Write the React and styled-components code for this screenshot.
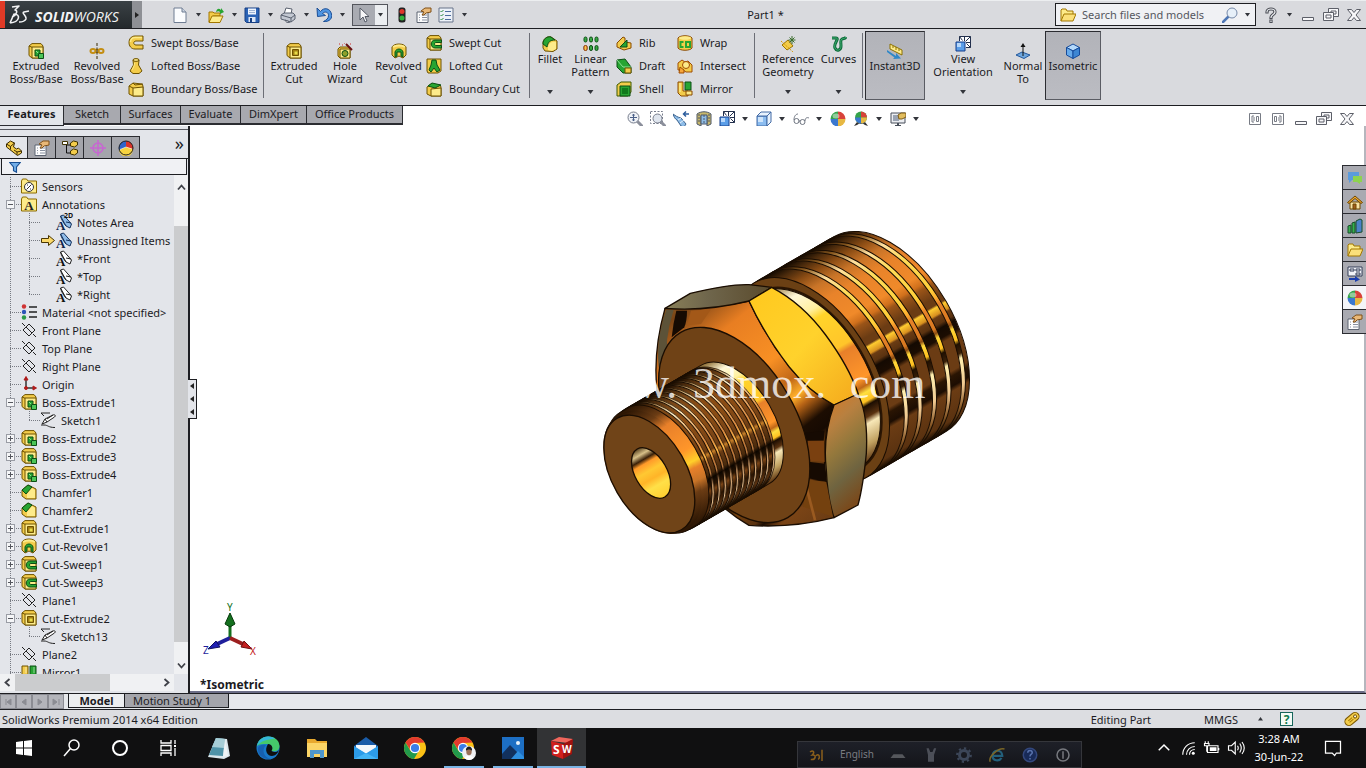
import React from "react";
import styled, { createGlobalStyle, css } from "styled-components";

const GlobalStyle = createGlobalStyle`
  * {
    box-sizing: border-box;
  }

  body {
    margin: 0;
    background: #fff;
    color: #1b1b1f;
    font: 11px/13px "Noto Sans", "Open Sans", sans-serif;
  }

  button, input {
    margin: 0;
    padding: 0;
    border: 0;
    border-radius: 0;
    background: none;
    color: inherit;
    font: inherit;
  }

  ul {
    margin: 0;
    padding: 0;
    list-style: none;
  }

  svg {
    display: block;
    flex: none;
  }
`;

/* ---------- icons ---------- */

const Y = "#f3cc4a";
const YL = "#fdeb8a";
const YD = "#6e5200";
const G = "#27a532";
const GD = "#0c4f14";

const yellowBox = (
  <g stroke={YD} strokeLinejoin="round">
    <path d="M1 3l3-2.400h9l2 2.400v12h-11l-3-2.500z" fill={Y} />
    <path d="M4 4h11v11h-11zM1 3l3 1.200" fill={YL} />
  </g>
);

const icons = {
  extrude: (
    <g>
      {yellowBox}
      <path d="M7 7h5v6H7z" fill={G} stroke={GD} />
      <path d="M8 8l4 4" stroke="#8fe097" />
      <path d="M10.500 10.500h5v5h-5z" fill="#4cc557" stroke={GD} />
    </g>
  ),
  revolve: (
    <g fill="none" stroke="#c38d12" strokeWidth="2">
      <ellipse cx="4" cy="8" rx="2.500" ry="2" />
      <ellipse cx="12" cy="8" rx="2.500" ry="2" />
      <path d="M6 6.500h4M6 9.500h4" strokeWidth="1" />
      <path d="M8 0v3M8 4.500v7M8 13v3" stroke="#3a2a00" strokeWidth="1" />
    </g>
  ),
  sweep: (
    <g>
      <path d="M15 1H7C-1 1-1 14 7 14h8v-4H8C5 10 5 6 8 6h7z" fill={Y} stroke={YD} />
      <path d="M14 2.500H7C4 2.500 2.500 5 2.500 7" fill="none" stroke={YL} strokeWidth="1.500" />
    </g>
  ),
  loft: (
    <g stroke={YD}>
      <path d="M5 2h6l-.5 5 3.500 6-3 2.500H5L2 13l3.500-6z" fill={Y} />
      <ellipse cx="8" cy="2" rx="3" ry="1.400" fill={YL} />
      <path d="M6.500 5L6 8l-2 4" stroke={YL} fill="none" />
    </g>
  ),
  boundary: (
    <g stroke={YD}>
      <path d="M1 5l4-3 9 1 1 2v10H5l-4-2z" fill={Y} />
      <path d="M5 7l10-1v9H5z" fill={YL} />
      <path d="M1 5l4 2M5 2l2 2 8-1" fill="none" />
    </g>
  ),
  cutExtrude: (
    <g>
      {yellowBox}
      <path d="M6.500 6.500h6v6h-6z" fill="#a27e12" stroke={YD} />
      <path d="M8.500 8.500h3v3h-3z" fill="#e7dd4a" />
    </g>
  ),
  hole: (
    <g>
      <path d="M1 6l2-2h9l1 2v9H3l-2-2z" fill={Y} stroke={YD} />
      <path d="M3 6h10v9H3z" fill={YL} stroke={YD} />
      <circle cx="8" cy="10.500" r="3" fill="#8da12a" stroke={GD} />
      <path d="M9 1l6 6" stroke="#6a1012" strokeWidth="2" />
      <path d="M2 1h1M5 2h1M7 0h1M13 1h1" stroke="#d02a2a" />
    </g>
  ),
  cutRevolve: (
    <g>
      <path d="M1 4c2-4 12-4 14 0v8l-3 3-4-2-4 2-3-3z" fill={Y} stroke={YD} />
      <path d="M2 4c3-2 9-2 12 0" fill="none" stroke={YL} strokeWidth="2" />
      <path d="M4 14V9c1-4 7-4 8 0v5l-2-1V9H6v4z" fill={G} stroke={GD} />
    </g>
  ),
  cutSweep: (
    <g>
      {yellowBox}
      <path d="M15.500 5H9c-5 0-5 8 0 8h6.500v-2.500H10c-2 0-2-3 0-3h5.500z" fill={G} stroke={GD} />
    </g>
  ),
  cutLoft: (
    <g>
      <path d="M1 1h14v12l-3 2H2l-1-2z" fill={Y} stroke={YD} />
      <path d="M6 2h4l1 5 3 5-3 2-3-4-3 4-2-2 2-5z" fill={G} stroke={GD} />
    </g>
  ),
  cutBoundary: (
    <g>
      <path d="M1 6l4-3 9 1 1 2v9H5l-4-2z" fill={Y} stroke={YD} />
      <path d="M5 8l10-1v8H5z" fill={YL} stroke={YD} />
      <path d="M2 5l4-3 9 2-6 3z" fill={G} stroke={GD} />
    </g>
  ),
  fillet: (
    <g>
      <path d="M1 6C2 2 6 0 9 1l6 4v8l-4 2.500L3 15l-2-3z" fill={Y} stroke={YD} />
      <path d="M1 8C1 3 5 0 9 1l4 3C8 4 6 6 5 11z" fill={G} stroke={GD} />
      <path d="M6 12c0-4 3-7 8-6v7l-4 2-4-1z" fill={YL} />
    </g>
  ),
  chamfer: (
    <g>
      <path d="M1 6l6-5 8 4v10H5l-4-3z" fill={Y} stroke={YD} />
      <path d="M1 6l6-5 4 2-6 7z" fill={G} stroke={GD} />
      <path d="M6 10l5-6 3 2v8H6z" fill={YL} />
    </g>
  ),
  pattern: (
    <g fill="#39a944" stroke={GD}>
      {[1, 6.500, 12].map((x) => (
        <React.Fragment key={x}>
          <rect x={x} y="1" width="3" height="5" rx="1.500" />
          <rect x={x} y="9.500" width="3" height="5" rx="1.500" />
        </React.Fragment>
      ))}
      <rect x="1" y="9.500" width="3" height="5" rx="1.500" fill={Y} stroke="#c0401c" />
    </g>
  ),
  rib: (
    <g>
      <path d="M1 8l6-6 2 1v4l6 1v5l-7 2-7-3z" fill={Y} stroke="#8a4a00" />
      <path d="M4 12l7-7v7z" fill={G} stroke={GD} />
    </g>
  ),
  draft: (
    <g>
      <path d="M1 2l8-1 6 8v6H7L1 9z" fill={G} stroke={GD} />
      <path d="M1 2l6 7 8 0" fill="none" stroke="#8fe097" />
      <path d="M9 10h6v5H9z" fill={Y} stroke={YD} />
    </g>
  ),
  shell: (
    <g>
      <path d="M1 4l4-3h10v10l-3 4H1z" fill={Y} stroke="#3c5a00" />
      <path d="M4 5h10v10H4z" fill={G} stroke={GD} />
      <path d="M6 7h6v6H6z" fill="#107a1c" />
    </g>
  ),
  wrap: (
    <g>
      <path d="M1 3c2-3 12-3 14 0v10c-2 3-12 3-14 0z" fill={Y} stroke="#8a4a00" />
      <ellipse cx="8" cy="3" rx="6" ry="1.800" fill={YL} />
      <path d="M6.500 7H3.500v5h3M9 7h4v5H9z" fill="none" stroke={G} strokeWidth="2" />
    </g>
  ),
  intersect: (
    <g stroke="#a04c00">
      <path d="M1 5l4-3 3 2 3-1 4 4v7H9l-3-2H1z" fill={Y} />
      <circle cx="9" cy="7" r="3.500" fill={YL} />
      <path d="M3 9l4 3v3H2z" fill="#f7a63a" />
    </g>
  ),
  mirror: (
    <g>
      <path d="M1 1h5v9h5v5H4l-3-3z" fill={Y} stroke="#8a4a00" />
      <path d="M8 1h6v8H8z" fill={G} stroke={GD} />
      <path d="M9 10h6v4H9z" fill={YL} stroke="#8a4a00" />
      <path d="M3 2v9" stroke={YL} strokeWidth="1.500" />
    </g>
  ),
  mirrorPair: (
    <g>
      <path d="M1 2h6v9h-2v4l-4-2z" fill={Y} stroke={YD} />
      <path d="M9 2h6v11l-4 2v-4H9z" fill={G} stroke={GD} />
      <path d="M5 3v6M13 3v6" stroke="#fff" strokeOpacity=".5" />
    </g>
  ),
  geometry: (
    <g>
      <path d="M2 9l6-5 5 6-6 4z" fill={Y} stroke="#9a7400" />
      <path d="M1 5l12 11" stroke="#d79a00" strokeDasharray="2 1" />
      <path d="M12 0v8M8.500 4h7M9.500 1.500l5 5M14.500 1.500l-5 5" stroke="#3b6d2c" />
    </g>
  ),
  curves: (
    <g fill="none">
      <path d="M1 2h4c4 0-3 6-1 10 2 4 6 2 6-2s-1-6 1-7 3 0 4-2" stroke="#0e6b3a" strokeWidth="3" />
      <path d="M1 2h4c4 0-3 6-1 10 2 4 6 2 6-2s-1-6 1-7 3 0 4-2" stroke="#3fae71" />
    </g>
  ),
  instant: (
    <g>
      <path d="M3 1l12 6v5L3 6z" fill={YL} stroke="#8c7000" />
      <path d="M6 3v2M9 4v3M12 6v2" stroke="#8c7000" />
      <path d="M0 7l9 6v-3l5 5.500-8 .5 1.500-1.500L0 9z" fill="#2f88c8" />
    </g>
  ),
  orientation: (
    <g strokeLinejoin="round">
      <path d="M4.500 .5h11v11h-11z" fill="#fff" />
      <path d="M4.500 5V.5h11v11H11M4.500 .5l3 4M15.500 .5l-5 5M15.500 11.500l-4-4M9.500 1v4M15 6.500h-4" fill="none" stroke="#23304d" />
      <path d="M1 6h9v9H1z" fill="#5b9ee8" stroke="#163f8c" />
      <path d="M2 7h4v4H2z" fill="#b8d8fb" />
    </g>
  ),
  normal: (
    <g>
      <path d="M1 12l6-3 8 3-6 3.500z" fill="#6fa7df" stroke="#23579c" />
      <path d="M8 13V2" stroke="#111" />
      <path d="M5.500 4L8 0l2.500 4z" fill="#111" />
    </g>
  ),
  isometric: (
    <g stroke="#164b9b" strokeLinejoin="round">
      <path d="M8 1l6.500 3.500L8 8 1.500 4.500z" fill="#b4d9fb" />
      <path d="M1.500 4.500L8 8v7.500L1.500 12z" fill="#67abeb" />
      <path d="M14.500 4.500L8 8v7.500l6.500-3.500z" fill="#3d86d3" />
    </g>
  ),
  page: (
    <g>
      <path d="M2 1h8l4 4v10.500H2z" fill="#fbfcfe" stroke="#6e7c92" />
      <path d="M10 1v4h4" fill="#cdd6e3" stroke="#6e7c92" />
    </g>
  ),
  open: (
    <g>
      <path d="M1 5h4l1 1h6v3H5l-4 6z" fill={Y} stroke="#a27700" />
      <path d="M4 9h11l-3 6.500H1z" fill={YL} stroke="#a27700" />
      <path d="M8 5c1-4 3-4 5-2V1l3 4-4 2V5C11 4 10 4 8 5z" fill={G} />
    </g>
  ),
  save: (
    <g>
      <path d="M1 1h14v14.500H2.500L1 14z" fill="#2b63b6" stroke="#173f83" />
      <path d="M4 1.500h8v6H4z" fill="#eef4fd" />
      <path d="M5 3.500h6M5 5.500h6" stroke="#9fb4d4" />
      <path d="M4.500 10h7v5h-7z" fill="#dce6f5" />
      <path d="M6 11h2v4H6z" fill="#173f83" />
    </g>
  ),
  print: (
    <g stroke="#59606e">
      <path d="M4 7l2-6 6 1-1 5z" fill="#fff" />
      <path d="M1 8l3-2h9l2 2v4l-4 3-10-3z" fill="#c3c8d2" />
      <path d="M1 8l10 3 4-3M11 11v4" fill="none" />
      <path d="M5 13l5 2-3 .8z" fill="#fff" />
    </g>
  ),
  undo: (
    <path
      d="M1 1l.5 8.500 8-1-3-2C9 4 12.500 5 12.500 8.500c0 3-2 4.500-5 6C14 15 16.500 11 15.500 7 14 1 8 0 4.500 4.500z"
      fill="#4f95e2"
      stroke="#1b4e96"
      strokeLinejoin="round"
    />
  ),
  cursor: <path d="M4 1v12l3-3 2 5 2-1-2-4.500h4z" fill="#f6f6f8" stroke="#555a66" />,
  traffic: (
    <g>
      <rect x="4.500" y=".5" width="7" height="15" rx="2.500" fill="#222" />
      <circle cx="8" cy="4.500" r="2.500" fill="#e0352b" />
      <circle cx="8" cy="11" r="2.500" fill="#32b33c" />
    </g>
  ),
  properties: (
    <g>
      <path d="M1 5h11v10.500H1z" fill="#fdfdfd" stroke="#5d6472" />
      <path d="M3 8h1M6 8h5M3 10.500h1M6 10.500h5M3 13h1M6 13h5" stroke="#8890a0" />
      <path d="M5 4l4-3h6v4l-5 1-2 2H6l2-3z" fill="#e9b877" stroke="#805018" />
    </g>
  ),
  options: (
    <g>
      <path d="M1 1h14v14H1z" fill="#edf2f9" stroke="#667389" />
      <path d="M2.500 4l1 1 2-2M2.500 8l1 1 2-2M2.500 12l1 1 2-2" fill="none" stroke="#2d8c3f" />
      <path d="M7 4.500h6M7 8.500h6M7 12.500h6" stroke="#4c6c9e" />
    </g>
  ),
  folder: (
    <g strokeLinejoin="round">
      <path d="M1 14V3l1-1h4l1 2h6v3" fill={YL} stroke="#a27700" />
      <path d="M4 7h12l-3 7H1z" fill="#fbe07a" stroke="#a27700" />
    </g>
  ),
  lens: (
    <g fill="none">
      <path d="M1 15l5-5" stroke="#4f77b5" strokeWidth="2.500" strokeLinecap="round" />
      <circle cx="10" cy="6" r="5" fill="#e7f0f9" stroke="#7689a8" />
    </g>
  ),
  help: (
    <g fill="none" strokeLinecap="square">
      <path d="M4 5c0-4 8-4 8 0 0 2.500-4 2.500-4 5.500M8 14v.5" stroke="#4a4d55" strokeWidth="3.200" />
      <path d="M4 5c0-4 8-4 8 0 0 2.500-4 2.500-4 5.500M8 14v.5" stroke="#eef0f3" strokeWidth="1.200" />
    </g>
  ),
  minimize: <path d="M2.500 10.500h11v3h-11z" fill="#f7f7f9" stroke="#5c5f68" />,
  restore: (
    <g fill="#f7f7f9" stroke="#5c5f68">
      <path d="M5.500 1.500h10v8h-10zM8 4h5v3H8z" />
      <path d="M.5 5.500h10v8H.5zM3 8h5v3H3z" />
    </g>
  ),
  close: (
    <path
      d="M1.500 2.500h4L8 5.500l2.500-3h4L10 8l4.500 5.500h-4L8 10.500l-2.500 3h-4L6 8z"
      fill="#f7f7f9"
      stroke="#5c5f68"
    />
  ),
  paneLeft: (
    <g fill="none" stroke="#777b84">
      <path d="M2.500 2.500h11v11h-11zM9.500 5.500h2v5h-2z" />
      <path d="M7 5H5v6h2M7 6v4" />
    </g>
  ),
  paneRight: (
    <g fill="none" stroke="#777b84">
      <path d="M2.500 2.500h11v11h-11zM4.500 5.500h2v5h-2z" />
      <path d="M9 5h2v6H9M9 6v4" />
    </g>
  ),
  zoomFit: (
    <g fill="none" stroke="#777d8c">
      <path d="M10 10l5 5" stroke="#8b8f9b" strokeWidth="3" strokeLinecap="round" />
      <circle cx="6.500" cy="6.500" r="5.500" fill="#eef1f6" />
      <path d="M6.500 3v7M3 6.500h7M5.500 4.500l1-1.500 1 1.500M5.500 8.500l1 1.500 1-1.500" stroke="#4a5f87" />
    </g>
  ),
  zoomArea: (
    <g fill="none" stroke="#777d8c">
      <path d="M.5 .5h12v12H.5z" strokeDasharray="2 1.500" />
      <path d="M11 11l4 4" stroke="#8b8f9b" strokeWidth="3" strokeLinecap="round" />
      <circle cx="7.500" cy="7.500" r="4.500" fill="#dfe5ee" />
    </g>
  ),
  prevView: (
    <g>
      <path d="M0 3c3 2 4 3 8 4l5 6-2 3-3-1-4-6C2 8 1 6 0 3z" fill="#8dbce8" stroke="#3d648f" />
      <path d="M5 9l3-2M7 12l4-3" stroke="#e8f3fc" />
      <path d="M16 3h-5M13 .5L10.500 3 13 5.500" fill="none" stroke="#2c5d9d" strokeWidth="1.500" />
    </g>
  ),
  section: (
    <g stroke="#4c5768">
      <path d="M1 3c4-3 10-3 14 0v10l-4 2V5H5v10l-4-2z" fill="#c7b76b" />
      <path d="M5 4h6v9H5z" fill="#8fbde6" />
      <path d="M3 3v9M13 3v9M8 4v9" strokeDasharray="2 1" />
    </g>
  ),
  display: (
    <g stroke="#426aa5" strokeLinejoin="round">
      <path d="M1 5h10v10H1z" fill="#8cbdf0" />
      <path d="M2 6h5v5H2z" fill="#cfe5fb" stroke="none" />
      <path d="M1 5l4-4h10l-4 4zM11 15l4-4V1l-4 4z" fill="#e7f2fd" />
    </g>
  ),
  glasses: (
    <g fill="none" stroke="#6e7480">
      <circle cx="3.500" cy="10" r="2.500" />
      <circle cx="9.500" cy="11" r="2.500" />
      <path d="M1 9C1 5 3 3 5 3M12 10c0-3 2-4 4-3M6 10h1" />
    </g>
  ),
  sphere: (
    <g>
      <path d="M8 8V.5A7.500 7.500 0 0 0 .5 8z" fill="#35a34b" />
      <path d="M8 8V.5A7.500 7.500 0 0 1 15.500 8z" fill="#d8433a" />
      <path d="M8 8H.5A7.500 7.500 0 0 0 8 15.500z" fill="#3b78cf" />
      <path d="M8 8h7.500A7.500 7.500 0 0 1 8 15.500z" fill="#e7b843" />
      <ellipse cx="6" cy="5" rx="3.500" ry="2.500" fill="#fff" fillOpacity=".45" />
    </g>
  ),
  scene: (
    <g>
      <circle cx="8" cy="6.500" r="6" fill="#35a34b" />
      <path d="M8 6.500V.5a6 6 0 0 1 6 6z" fill="#d8433a" />
      <path d="M8 6.500H2a6 6 0 0 0 6 6z" fill="#3b78cf" />
      <path d="M8 6.500h6a6 6 0 0 1-6 6z" fill="#e7b843" />
      <path d="M1 15l3-4 2 1.500h4l2-1.500 3 4-3-1-1.500-1h-5L4 14z" fill="#333" />
    </g>
  ),
  viewSettings: (
    <g>
      <path d="M1 2h14v10H1z" fill="#eceef2" stroke="#484e5a" />
      <path d="M3 4h6v6H3z" fill="#9aa3b2" />
      <path d="M5 15h6M8 12v3" stroke="#484e5a" strokeWidth="2" />
      <path d="M8 4l3-2h5v4l-4 2H9z" fill="#e2bd5d" stroke="#7c5b15" />
    </g>
  ),
  part: (
    <g stroke="#3c2b00" strokeLinejoin="round">
      <path d="M.5 4l4-3 4 2-1 4 3 2 2-1 3 3v2l-4 2.500L.5 7z" fill={Y} />
      <path d="M.5 4l4 2.500 4-3.500M4.500 6.500v3M8 10l3 2 4.500-1M11 12v3" fill="none" />
    </g>
  ),
  config: (
    <g stroke="#403300">
      <path d="M4.500 1v12H8M4.500 5H8" fill="none" stroke="#111" />
      <path d="M.5 1.500h5v3h-5z" fill="#fff" />
      <path d="M8.500 3l3-2 4 1v3l-3 2-4-1zM8.500 11l3-2 4 1v3l-3 2-4-1z" fill={Y} />
    </g>
  ),
  target: (
    <g fill="none" stroke="#c865d2" strokeWidth="1.500">
      <circle cx="8" cy="8" r="5" />
      <path d="M8 0v16M0 8h16" />
    </g>
  ),
  appearance: (
    <g>
      <path d="M8 8V1a7 7 0 0 1 5 12z" fill="#d8332a" />
      <path d="M8 8L3 13A7 7 0 0 1 8 1z" fill="#2e64c9" />
      <path d="M8 7l7 2a7 7 0 0 1-14 1z" fill="#f6d33e" />
      <path d="M8 7l-6 2.500M8 7l6 2" stroke="#fff" strokeOpacity=".6" />
      <circle cx="8" cy="8" r="7" fill="none" stroke="#222" />
    </g>
  ),
  sensors: (
    <g>
      <path d="M.5 15V3l1-2h4l1.500 2h8.500v12z" fill={YL} stroke="#8b6b00" />
      <circle cx="8" cy="9" r="4.500" fill="#fff" stroke="#333" />
      <path d="M5.500 11.500l5-5M6 7h1M9 11h1" stroke="#333" />
    </g>
  ),
  annotations: (
    <g>
      <path d="M.5 15V3l1-2h4l1.500 2h8.500v12z" fill={YL} stroke="#8b6b00" />
      <text x="8" y="14" textAnchor="middle" fontFamily="Liberation Serif, serif" fontWeight="700" fontSize="13" fill="#222">A</text>
    </g>
  ),
  note: (
    <g>
      <path d="M4.500 2l3-1 8 9-1.500 4-4-2z" fill="#8fbce9" stroke="#16345f" />
      <path d="M4.500 2c1 4 3 7 5.500 10M10 8l5 1" fill="none" stroke="#16345f" />
      <text x="0" y="16" fontFamily="Liberation Serif, serif" fontWeight="700" fontSize="13" fill="#10264c">A</text>
    </g>
  ),
  notePlain: (
    <g>
      <path d="M4.500 2l3-1 8 9-1.500 4-4-2z" fill="#fff" stroke="#222" />
      <path d="M4.500 2c1 4 3 7 5.500 10M10 8l5 1" fill="none" stroke="#222" />
      <text x="0" y="16" fontFamily="Liberation Serif, serif" fontWeight="700" fontSize="13" fill="#111">A</text>
    </g>
  ),
  material: (
    <g>
      <path d="M8 3h8M8 8h8M8 13h8" stroke="#222" strokeWidth="1.500" />
      <circle cx="3" cy="2.500" r="2.200" fill="#cf3434" />
      <circle cx="3" cy="8" r="2.200" fill="#2c54b7" />
      <circle cx="3" cy="13.500" r="2.200" fill="#2b9a46" />
    </g>
  ),
  plane: (
    <g fill="none" stroke="#222">
      <path d="M8 2l6 6-6 6-6-6z" />
      <path d="M1 1l3 3M12 12l3 3M5 5l6 6" />
    </g>
  ),
  origin: (
    <g stroke="#b01c1c" fill="#b01c1c">
      <path d="M5 2v10h9" fill="none" stroke="#333" strokeWidth="1.500" />
      <path d="M3 4l2-3.500L7 4zM12 10l3.500 2-3.500 2z" />
      <circle cx="5" cy="12" r="1.500" />
    </g>
  ),
  sketch: (
    <g fill="none" stroke="#222">
      <path d="M10 1H1l3 3M1 13h3c4 0 4 2.500 11 2.500" />
      <path d="M2 12l3-5 8-4c2-1 3 1 1.500 2L7 10zM5 7l2 3M13 3l-6 4" fill="#fff" />
    </g>
  ),
  task: (
    <g>
      <path d="M1 2h11v8H5l-3 3v-3H1z" fill="#5b9bdc" />
      <path d="M6 6h9v6h-2v2l-3-2H6z" fill="#8ed34f" />
    </g>
  ),
  home: (
    <g stroke="#6c4700">
      <path d="M3 8h10v7H3z" fill="#f7e2a5" />
      <path d="M.5 8.500L8 2l7.500 6.500L14 9.500 8 4.500l-6 5z" fill="#f2a72c" />
      <path d="M6 10h3v5H6z" fill="#a15b1c" />
    </g>
  ),
  library: (
    <g stroke="#174c2a">
      <path d="M1 8l3-1v8H1zM5 5l3-1v11H5z" fill="#37b04d" />
      <path d="M9 3l4-2 2 1v12l-6 1z" fill="#4a82c9" />
    </g>
  ),
  palette: (
    <g>
      <path d="M1 1h14v9H1z" fill="#f1f3f8" stroke="#333c56" />
      <path d="M3 3h4v2H3zM9 3h4v2H9zM9 7h4v2H9z" fill="none" stroke="#333c56" />
      <path d="M2 12h6v-2l5 3.500L8 16v-2H2z" fill="#1c3fae" />
    </g>
  ),
  filter: <path d="M1 2h14l-5 6v7l-4-2V8z" fill="#72aee8" stroke="#184f93" strokeWidth="1.500" />,
  tag: (
    <g transform="rotate(-40 8 8)">
      <rect x="0" y="4" width="16" height="8" rx="4" fill={Y} stroke="#7c5800" />
      <circle cx="12" cy="8" r="1.500" fill="#fff" stroke="#7c5800" />
      <path d="M4 7h5M4 9h5" stroke="#a77a00" />
    </g>
  ),
};

const Icon = ({ name, size = 16 }) => (
  <svg width={size} height={size} viewBox="0 0 16 16" aria-hidden="true">
    {icons[name]}
  </svg>
);

const Caret = styled.span`
  width: 7px;
  height: 4px;
  flex: none;
  background: #33353b;
  clip-path: polygon(8% 0, 92% 0, 50% 100%);
`;

/* ---------- title bar ---------- */

const Window = styled.div`
  display: flex;
  flex-direction: column;
  min-height: 100vh;
`;

const TitleBar = styled.header`
  display: flex;
  align-items: center;
  height: 29px;
  background: #d9dade;
  border-top: 1px solid #eceef0;
  border-bottom: 1px solid #1d1e22;
`;

const Brand = styled.div`
  display: flex;
  align-items: center;
  width: 132px;
  height: 27px;
  padding-left: 4px;
  background: linear-gradient(#3a4145, #24292c);
  border-left: 5px solid #e03a26;
`;

const Grip = styled.button`
  width: 10px;
  height: 27px;
  background: #8e9095;
  display: flex;
  align-items: center;
  justify-content: center;

  &::after {
    content: "";
    border: 3px solid transparent;
    border-left: 4px solid #222;
    border-right: 0;
  }
`;

const ToolButton = styled.button`
  display: flex;
  align-items: center;
  justify-content: center;
  gap: 7px;
  min-width: 16px;
  height: 22px;
`;

const QuickBar = styled.div`
  display: flex;
  align-items: center;
  gap: 6px;
  padding-left: 30px;
`;

const SelectButton = styled.button`
  display: flex;
  align-items: center;
  height: 22px;
  border: 1px solid #53555c;
  background: #eceef1;

  span:first-child {
    display: flex;
    align-items: center;
    justify-content: center;
    width: 22px;
    height: 20px;
    margin-right: 2px;
    background: #a9abb2;
  }

  ${Caret} {
    margin-right: 3px;
  }
`;

const DocTitle = styled.div`
  flex: 1;
  padding-left: 8px;
  text-align: center;
`;

const Search = styled.label`
  display: flex;
  align-items: center;
  gap: 6px;
  width: 201px;
  height: 23px;
  padding: 0 4px;
  background: #f0f1f4;
  border: 1px solid #1d1e22;

  input {
    flex: 1;
    min-width: 0;
    outline: 0;
  }

  input::placeholder {
    color: #55575e;
    opacity: 1;
  }
`;

const WindowButtons = styled.div`
  display: flex;
  align-items: center;
  gap: 7px;
  padding: 0 4px 0 7px;
`;

/* ---------- ribbon ---------- */

const Ribbon = styled.div`
  display: flex;
  height: 77px;
  padding-left: 6px;
  background: #d9dade;
  border-bottom: 1px solid #1d1e22;
`;

const BigButton = styled.button`
  display: flex;
  flex-direction: column;
  align-items: center;
  width: ${(p) => p.$w}px;
  height: ${(p) => (p.$active ? 69 : 76)}px;
  padding-top: ${(p) => (p.$drop ? 7 : 14)}px;
  white-space: nowrap;
  flex: none;

  ${(p) =>
    p.$active &&
    css`
      margin-top: 2px;
      padding-top: 11px;
      background: linear-gradient(#b2b3b9, #bbbcc2);
      border: 1px solid #5a5c63;
      border-top-color: #2b2c31;
      border-left-color: #2b2c31;
    `}

  ${Caret} {
    margin-top: auto;
    margin-bottom: 11px;
  }

  p {
    margin: 0;
  }
`;

const ButtonList = styled.div`
  display: flex;
  flex-direction: column;
  width: ${(p) => p.$w}px;
  padding-top: 2px;
  flex: none;
`;

const ListButton = styled.button`
  display: flex;
  align-items: center;
  gap: 7px;
  height: 23px;
  white-space: nowrap;
`;

const Separator = styled.span`
  width: 1px;
  height: 65px;
  margin: ${(p) => (p.$tight ? "4px 2px 0 1px" : "4px 5px 0")};
  background: #6c6e76;
`;

const Big = ({ icon, lines, w, drop, active }) => (
  <BigButton $w={w} $drop={drop} $active={active} aria-pressed={active}>
    <Icon name={icon} />
    <p>
      {lines[0]}
      <br />
      {lines[1]}
    </p>
    {drop && <Caret />}
  </BigButton>
);

const List = ({ w, items }) => (
  <ButtonList $w={w}>
    {items.map(([icon, label]) => (
      <ListButton key={label}>
        <Icon name={icon} />
        {label}
      </ListButton>
    ))}
  </ButtonList>
);

/* ---------- command tabs and view toolbar ---------- */

const TabRow = styled.div`
  display: flex;
  align-items: flex-start;
  height: 20px;
`;

const CommandTabs = styled.nav`
  display: flex;
`;

const CommandTab = styled.button`
  width: ${(p) => p.$w}px;
  height: 19px;
  padding-bottom: 2px;
  background: #a8a9af;
  border: 1px solid #2b2c31;
  border-width: 0 1px 2px 0;

  ${(p) =>
    p.$active &&
    css`
      height: 20px;
      padding-bottom: 4px;
      background: #e3e5e9;
      border-bottom-width: 1px;
      font-weight: 700;
    `}
`;

const ViewTools = styled.div`
  display: flex;
  flex: 1;
  justify-content: center;
  gap: 7px;
  padding: 2px 104px 0 0;
`;

const DocButtons = styled.div`
  display: flex;
  gap: 7px;
  padding: 2px 11px 0 0;
`;

/* ---------- feature tree ---------- */

const Body = styled.main`
  display: flex;
  flex: 1;
`;

const Sidebar = styled.aside`
  display: flex;
  flex-direction: column;
  width: 190px;
  flex: none;
  background: #e3e5ea;
  border-right: 2px solid #1d1e22;
`;

const PanelTabs = styled.div`
  display: flex;
  align-items: flex-end;
  height: 30px;
  margin-top: 3px;
  border-top: 1px solid #55575e;
  border-bottom: 1px solid #1d1e22;
`;

const PanelTab = styled.button`
  display: flex;
  align-items: center;
  justify-content: center;
  width: 28px;
  height: 22px;
  background: ${(p) => (p.$active ? "#e3e5ea" : "#a4a5ab")};
  border: 1px solid #2b2c31;
  border-left-width: 0;
  border-bottom: 0;
`;

const More = styled.button`
  margin: 0 4px 8px auto;
  font-size: 18px;
  line-height: 13px;
`;

const Filter = styled.label`
  display: flex;
  align-items: center;
  gap: 6px;
  height: 16px;
  margin: 0 1px;
  padding-left: 7px;
  background: #f0f1f4;
  border: 1px solid #1d1e22;
  border-top: 0;

  input {
    width: 140px;
    outline: 0;
  }
`;

const TreeArea = styled.div`
  display: flex;
  height: 499px;
`;

const Tree = styled.ul`
  flex: 1;
  min-width: 0;
  padding-top: 2px;
  overflow: hidden;
`;

const TreeRow = styled.li`
  display: flex;
  align-items: center;
  height: 18px;
  white-space: nowrap;

  b {
    padding-left: 5px;
    font-weight: 400;
  }
`;

const dots = (dir) => `repeating-linear-gradient(${dir}, #777a82 0 1px, transparent 1px 2px)`;

const Gutter = styled.span`
  display: flex;
  align-items: center;
  width: ${(p) => (p.$sketch ? 19 : p.$inner ? 20 : 21)}px;
  height: 18px;
  flex: none;
  padding-left: 6px;
  background-image: ${dots("to bottom")}, ${dots("to right")};
  background-repeat: no-repeat;
  background-position: ${(p) => (p.$inner ? 8 : 10)}px 0, ${(p) => (p.$inner ? 8 : 10)}px 9px;
  background-size: 1px ${(p) => (p.$last ? 9 : 18)}px, ${(p) => (p.$through ? 0 : 11)}px 1px;
`;

const Expander = styled.button`
  width: 9px;
  height: 9px;
  border: 1px solid #9a9da5;
  background:
    linear-gradient(#55575e, #55575e) center / 5px 1px no-repeat,
    linear-gradient(#55575e, #55575e) center / 1px ${(p) => (p.$open ? 0 : 5)}px no-repeat,
    #f5f6f8;
`;

const ArrowSlot = styled.span`
  display: flex;
  width: 15px;
  flex: none;
`;

const ScrollColumn = styled.div`
  display: flex;
  flex-direction: column;
  width: 14px;
  padding-top: 4px;
  background: #f0f1f3;
`;

const ScrollArrow = styled.button`
  display: flex;
  align-items: center;
  justify-content: center;
  width: 15px;
  height: 17px;
`;

const ScrollThumb = styled.span`
  height: 416px;
  margin-top: 30px;
  background: #cbccce;
`;

const ScrollRow = styled.div`
  display: flex;
  height: 17px;
  width: 174px;
  background: #f0f1f3;

  span {
    width: 95px;
    background: #cbccce;
  }

  button:last-child {
    margin-left: auto;
  }
`;

const Chevron = ({ d }) => (
  <svg width="9" height="9" viewBox="0 0 9 9" aria-hidden="true">
    <path d={d} fill="none" stroke="#3f4148" strokeWidth="1.800" />
  </svg>
);

const YellowArrow = () => (
  <svg width="14" height="11" viewBox="0 0 14 11" aria-hidden="true">
    <path d="M.5 3.500h7v-3l6 5-6 5v-3h-7z" fill="#fbd96a" stroke="#4a3600" />
  </svg>
);

const treeItems = [
  { icon: "sensors", label: "Sensors" },
  { icon: "annotations", label: "Annotations", open: true },
  { icon: "note", label: "Notes Area", level: 2, badge: true },
  { icon: "note", label: "Unassigned Items", level: 2, arrow: true },
  { icon: "notePlain", label: "*Front", level: 2 },
  { icon: "notePlain", label: "*Top", level: 2 },
  { icon: "notePlain", label: "*Right", level: 2, last: true },
  { icon: "material", label: "Material <not specified>" },
  { icon: "plane", label: "Front Plane" },
  { icon: "plane", label: "Top Plane" },
  { icon: "plane", label: "Right Plane" },
  { icon: "origin", label: "Origin" },
  { icon: "extrude", label: "Boss-Extrude1", open: true },
  { icon: "sketch", label: "Sketch1", level: 1, last: true },
  { icon: "extrude", label: "Boss-Extrude2", open: false },
  { icon: "extrude", label: "Boss-Extrude3", open: false },
  { icon: "extrude", label: "Boss-Extrude4", open: false },
  { icon: "chamfer", label: "Chamfer1" },
  { icon: "chamfer", label: "Chamfer2" },
  { icon: "cutExtrude", label: "Cut-Extrude1", open: false },
  { icon: "cutRevolve", label: "Cut-Revolve1", open: false },
  { icon: "cutSweep", label: "Cut-Sweep1", open: false },
  { icon: "cutSweep", label: "Cut-Sweep3", open: false },
  { icon: "plane", label: "Plane1" },
  { icon: "cutExtrude", label: "Cut-Extrude2", open: true },
  { icon: "sketch", label: "Sketch13", level: 1, last: true },
  { icon: "plane", label: "Plane2" },
  { icon: "mirrorPair", label: "Mirror1" },
];

const TreeItem = ({ icon, label, open, level = 0, arrow, last, badge }) => (
  <TreeRow>
    <Gutter $through={level > 0}>
      {open !== undefined && <Expander $open={open} aria-label={`Toggle ${label}`} />}
    </Gutter>
    {level > 0 && <Gutter $inner $sketch={level === 1} $last={last} />}
    {level === 2 && <ArrowSlot>{arrow && <YellowArrow />}</ArrowSlot>}
    <svg width="16" height="16" viewBox="0 0 16 16" overflow="visible" aria-hidden="true">
      {icons[icon]}
      {badge && (
        <text x="8" y="4" fontSize="7" fontWeight="700" fill="#111">
          2D
        </text>
      )}
    </svg>
    <b>{label}</b>
  </TreeRow>
);

/* ---------- 3D view ---------- */

const Viewport = styled.section`
  position: relative;
  display: flex;
  flex: 1;
  align-items: center;
  justify-content: center;
  padding-bottom: 46px;
  background: #fff;
  border-right: 2px solid #b5b6bd;
  border-bottom: 2px solid #6b6d86;
`;

const Collapse = styled.button`
  position: absolute;
  left: -2px;
  top: 253px;
  width: 9px;
  height: 40px;
  display: flex;
  flex-direction: column;
  align-items: center;
  justify-content: space-around;
  background: #e3e5ea;
  border: 1px solid #1d1e22;
  border-left: 0;

  i {
    border: 3px solid transparent;
    border-right: 4px solid #222;
    border-left: 0;
  }
`;

const Orientation = styled.div`
  position: absolute;
  left: 10px;
  bottom: 0;
  font-weight: 700;
  font-size: 12px;

  div {
    padding-top: 16px;
  }
`;

const TaskPane = styled.div`
  position: absolute;
  right: -2px;
  top: 39px;
  width: 24px;
  border-top: 1px solid #2b2c31;
  border-left: 1px solid #2b2c31;
`;

const TaskButton = styled.button`
  display: flex;
  align-items: center;
  justify-content: center;
  width: 23px;
  height: 24px;
  background: ${(p) => (p.$active ? "#f4f5f8" : "#a9aab1")};
  border-bottom: 1px solid #2b2c31;
`;

const stops = (list) => list.map(([o, c]) => <stop key={o} offset={o} stopColor={c} />);

const thread = [
  [0, "#120900"], [0.04, "#4a2a0c"], [0.09, "#8a4c14"], [0.15, "#c87428"], [0.22, "#e8832a"], [0.34, "#f08a2a"],
  [0.38, "#d0701c"], [0.4, "#9a5418"], [0.46, "#6b3c14"], [0.49, "#6b3c14"], [0.5, "#ffcb30"],
  [0.53, "#d89020"], [0.54, "#6b3c14"], [0.57, "#5a3210"], [0.59, "#140a02"], [0.63, "#1c0d02"],
  [0.65, "#6b3c14"], [0.78, "#6b3c14"], [0.8, "#2a1503"], [0.84, "#1c0d02"], [0.86, "#6b3c14"], [0.97, "#5a3210"], [1, "#120900"],
];

const groove = [
  [0, "#2a1503"], [0.06, "#8a5a20"], [0.14, "#ffe0a0"], [0.24, "#ffdc5a"], [0.42, "#ffcf3a"],
  [0.46, "#ffb030"], [0.49, "#e8842a"], [0.58, "#d87820"], [0.6, "#8a4c14"], [0.62, "#ffd83a"], [0.67, "#ffc020"],
  [0.69, "#201002"], [0.73, "#3a2008"], [0.75, "#fff0b0"], [0.86, "#f0c890"], [0.94, "#8a5a28"], [1, "#120900"],
];

const fineThread = [
  [0, "#120900"], [0.06, "#4a2a0c"], [0.14, "#7a4818"], [0.24, "#8a4c14"], [0.36, "#8a4c14"],
  [0.5, "#7a4416"], [0.57, "#6b3c14"], [0.59, "#c88028"], [0.62, "#6b3c14"], [0.72, "#4a2a0c"],
  [0.75, "#0c0600"], [0.8, "#2a1503"], [0.83, "#7a4416"], [0.88, "#2a1503"], [0.95, "#5a3210"], [1, "#120900"],
];

const fineGroove = [
  [0, "#2a1503"], [0.08, "#b89058"], [0.2, "#fff0c8"], [0.34, "#f0b878"], [0.5, "#d88840"],
  [0.6, "#ffb84a"], [0.64, "#c07838"], [0.72, "#b87840"], [0.75, "#1c0d02"], [0.8, "#c09060"], [0.92, "#e8c090"], [1, "#120900"],
];

const neck = [
  [0, "#8a6a30"], [0.1, "#fff8d8"], [0.2, "#fff0a0"], [0.25, "#ffd42a"], [0.43, "#ffc52a"],
  [0.46, "#e8802a"], [0.62, "#ff962a"], [0.66, "#c06818"], [0.69, "#ffe040"], [0.73, "#ffc020"],
  [0.75, "#1c0d02"], [0.8, "#5a3210"], [0.83, "#f8e8b8"], [0.92, "#c0a060"], [1, "#5a3210"],
];

// cross sections are circles seen at 30 degrees, so the short radius is 0.577 of the long one
const flat = 0.577;

const Disc = ({ r, t, ...rest }) => <ellipse cx="0" cy={-t} rx={r} ry={r * flat} {...rest} />;

const Tube = ({ r, from, to, fill, stroke = "#1a0d02", width = 3 }) => {
  const b = r * flat;
  return (
    <path
      d={`M${-r} ${-from}L${-r} ${-to}A${r} ${b} 0 0 1 ${r} ${-to}L${r} ${-from}A${r} ${b} 0 0 1 ${-r} ${-from}z`}
      fill={`url(#${fill})`}
      stroke={stroke}
      strokeWidth={width}
    />
  );
};

const bigThreads = [820, 770, 720, 670, 622];
const smallThreads = [268, 247, 226, 205, 184, 163, 142, 121, 100, 79, 58];

const Fitting = () => (
  <svg width="400" height="320" viewBox="-36 18 1200 960" role="img" aria-label="Threaded fitting">
    <defs>
      <linearGradient id="thread">{stops(thread)}</linearGradient>
      <linearGradient id="groove">{stops(groove)}</linearGradient>
      <linearGradient id="fine">{stops(fineThread)}</linearGradient>
      <linearGradient id="fineGroove">{stops(fineGroove)}</linearGradient>
      <linearGradient id="neck">{stops(neck)}</linearGradient>
      <linearGradient id="rim">
        {stops([[0, "#2a1503"], [0.15, "#6b3c14"], [0.25, "#e8802a"], [0.48, "#ff962a"], [0.58, "#ffd02a"], [0.63, "#e8802a"], [0.72, "#c87428"], [0.8, "#6b3c14"], [1, "#2a1503"]])}
      </linearGradient>
      <linearGradient id="topFace">{stops([[0, "#8a8058"], [0.4, "#6f664c"], [1, "#5a4a2c"]])}</linearGradient>
      <linearGradient id="hexFront" gradientUnits="userSpaceOnUse" x1="220" y1="270" x2="720" y2="900">
        {stops([[0, "#8a5a20"], [0.05, "#7a4416"], [0.2, "#e87e22"], [0.4, "#f89024"], [0.5, "#c06818"], [0.56, "#ffb02a"], [0.6, "#b86416"], [0.67, "#1c0d02"], [0.72, "#160a02"], [0.77, "#74410f"], [0.84, "#5a3210"], [0.86, "#1c0d02"], [0.9, "#7a4416"], [1, "#6b3c14"]])}
      </linearGradient>
      <linearGradient id="yellowFace" x1="0" y1="0" x2="1" y2="1">{stops([[0, "#ffc81e"], [0.5, "#ffd22c"], [1, "#f4a81c"]])}</linearGradient>
      <linearGradient id="sideFace" x1="0" y1="0" x2="0.3" y2="1">{stops([[0, "#d87a24"], [0.28, "#b88040"], [0.5, "#94783c"], [0.75, "#6f6440"], [1, "#7a4a1c"]])}</linearGradient>
      <linearGradient id="bore" x1="0" x2="1">{stops([[0, "#5a4420"], [0.12, "#d8c088"], [0.22, "#3a2008"], [0.3, "#ff9a2a"], [0.45, "#ffc832"], [0.6, "#ffb428"], [0.75, "#ffe048"], [1, "#ffcf30"]])}</linearGradient>
    </defs>

    <g transform="translate(181 759) rotate(60)">
      <Tube r={337} from={800} to={834} fill="thread" />
      {bigThreads.map((t) => (
        <React.Fragment key={t}>
          <Tube r={337} from={t - 50} to={t} fill="groove" />
          <Tube r={337} from={t - 50} to={t - 14} fill="thread" />
        </React.Fragment>
      ))}
      <Disc r={337} t={557} fill="#6b4014" stroke="#1a0d02" strokeWidth="3" />
      <Disc r={308} t={557} fill="#2a1503" />
      <Tube r={302} from={400} to={554} fill="neck" />
    </g>

    <g stroke="#1a0d02" strokeWidth="4" strokeLinejoin="round">
      <path
        d="M228 265Q350 270 480 243Q530 350 600 440Q660 515 735 555Q700 640 708 750Q715 830 735 893Q610 925 480 916Q400 870 330 790Q230 680 205 520Q190 400 228 265z"
        fill="url(#hexFront)"
      />
      <path d="M228 265L304 220Q420 192 480 194L548 202L480 243Q350 275 228 265z" fill="url(#topFace)" />
      <path d="M480 243L548 202Q640 250 710 345Q780 440 808 522L735 555Q660 515 600 440Q530 350 480 243z" fill="url(#yellowFace)" />
      <path d="M735 555L806 522Q838 580 832 700Q822 800 807 855L735 893Q715 830 712 750Q700 650 735 555z" fill="url(#sideFace)" />
    </g>
    <g stroke="none">
      <path d="M232 270h22q-30 90-18 170l-24 20q-16-90 20-190z" fill="#5c5238" />
      <path d="M262 272h32q0 30-8 50l-38 30q4-40 14-80z" fill="#160a02" />
      <path d="M306 272l60-4-30 44-42 4z" fill="#a35818" />
      <path d="M640 640l66-8-2 30-56 0z" fill="#160a02" />
      <path d="M655 662l50 0 2 64-48-4z" fill="#7a4010" />
      <path d="M658 725l50 6 4 54-54-10z" fill="#160a02" />
      <path d="M656 778l56 8 20 104-90-30z" fill="#74410f" />
      <path d="M652 800l26 100" stroke="#9a5a20" strokeWidth="8" />
    </g>

    <g transform="translate(181 762) rotate(60)">
      <Disc r={321} t={294} fill="#6f4216" stroke="#1a0d02" strokeWidth="4" />
      <Tube r={205} from={250} to={297} fill="neck" />
      {smallThreads.map((t) => (
        <React.Fragment key={t}>
          <Tube r={205} from={t - 24} to={t} fill="fineGroove" width={2} />
          <Tube r={205} from={t - 24} to={t - 8} fill="fine" width={3} />
        </React.Fragment>
      ))}
      <Tube r={204} from={18} to={40} fill="rim" />
      <Tube r={198} from={2} to={20} fill="rim" stroke="none" />
      <Disc r={193} t={0} fill="#704418" stroke="#1a0d02" strokeWidth="4" />
      <Disc r={83} t={6} fill="url(#bore)" stroke="#1a0d02" strokeWidth="4" />
    </g>

    <g fill="#fff" fillOpacity=".78" fontFamily="Liberation Serif, serif" fontSize="132">
      <text x="145" y="535">w.</text>
      <text x="312" y="535">3dmox.</text>
      <text x="782" y="535">com</text>
    </g>
  </svg>
);

const Triad = () => (
  <svg width="64" height="64" viewBox="0 -4 64 64" aria-hidden="true">
    <g fontSize="10" fontWeight="400">
      <path d="M30 36V20" stroke="#14701e" strokeWidth="3" />
      <path d="M25 22l5-11 5 11-5 3z" fill="#14701e" stroke="#063a0c" />
      <path d="M30 36l-15 7" stroke="#1f1f9c" strokeWidth="4" />
      <path d="M8 47l8-8 4 6z" fill="#2020b4" stroke="#101060" />
      <path d="M30 36l15 7" stroke="#9c1f1f" strokeWidth="4" />
      <path d="M52 47l-8-8-3 6z" fill="#c42020" stroke="#6a1010" />
      <text x="27" y="9" fill="#14701e">Y</text>
      <text x="3" y="52" fill="#1f1f9c">Z</text>
      <text x="50" y="53" fill="#c42020">X</text>
    </g>
  </svg>
);

/* ---------- bottom bars ---------- */

const SheetTabs = styled.div`
  display: flex;
  height: 17px;
  background: #e6e8eb;
  border-top: 1px solid #1d1e22;
  border-bottom: 1px solid #1d1e22;
`;

const StepButton = styled.button`
  display: flex;
  align-items: center;
  justify-content: center;
  width: 16px;
  height: 15px;
  background: #b3b4ba;
  border: 1px solid #8b8c93;
`;

const SheetTab = styled.button`
  height: 14px;
  width: ${(p) => p.$w}px;
  padding-bottom: 1px;
  text-align: ${(p) => (p.$active ? "center" : "left")};
  padding-left: ${(p) => (p.$active ? 0 : 8)}px;
  font-weight: ${(p) => (p.$active ? 700 : 400)};
  background: ${(p) => (p.$active ? "#eceef0" : "#a4a5ab")};
  border: 1px solid #1d1e22;
  border-top: 0;
  margin-left: ${(p) => (p.$active ? 4 : -1)}px;
`;

const StatusBar = styled.footer`
  display: flex;
  align-items: center;
  height: 18px;
  padding: 0 6px 0 2px;
  background: #dcdde1;
`;

const Spacer = styled.span`
  flex: ${(p) => (p.$w ? "none" : 1)};
  width: ${(p) => p.$w || 0}px;
`;

const HelpBadge = styled.button`
  width: 13px;
  height: 14px;
  background: #f3fbf6;
  border: 1px solid #16655a;
  color: #0b7a4b;
  font-weight: 700;
  font-size: 12px;
  line-height: 11px;
`;

const Taskbar = styled.footer`
  display: flex;
  height: 40px;
  background: #101011;
  color: #fff;
`;

const TaskbarButton = styled.button`
  display: flex;
  align-items: center;
  justify-content: center;
  width: ${(p) => p.$w}px;
  height: 40px;
  flex: none;
  background:
    linear-gradient(#7ab4e4, #7ab4e4) bottom / ${(p) => (p.$focus ? 49 : p.$running ? 40 : 0)}px 2px no-repeat,
    ${(p) => (p.$focus ? "#323335" : "transparent")};
`;

const LanguageBar = styled.div`
  display: flex;
  align-items: center;
  align-self: flex-end;
  justify-content: space-between;
  width: 285px;
  height: 27px;
  margin-left: auto;
  padding: 0 9px;
  background: linear-gradient(#1e2028, #14151a);
  border: 1px solid #35363b;
  color: #7a7c82;
  font-size: 10px;

  button {
    display: flex;
    align-items: center;
  }
`;

const Tray = styled.div`
  display: flex;
  align-items: center;
  gap: 6px;
  margin-left: 73px;
  padding-right: 23px;
`;

const Clock = styled.button`
  width: 56px;
  line-height: 18px;
  white-space: nowrap;
`;

const Glyph = ({ size = 24, children }) => (
  <svg width={size} height={size} viewBox="0 0 24 24" fill="none" aria-hidden="true">
    {children}
  </svg>
);

const chrome = (
  <>
    <circle cx="12" cy="12" r="11" fill="#fbc116" />
    <path d="M2.500 6.500A11 11 0 0 1 21.500 6.500L12 7l-4 8z" fill="#e33b2e" />
    <path d="M2.500 6.500A11 11 0 0 0 11 23l5-8.500-4 2.500-4.500-2z" fill="#229a4b" />
    <circle cx="12" cy="12" r="5.200" fill="#fff" />
    <circle cx="12" cy="12" r="4.100" fill="#3a7de8" />
  </>
);

const apps = [
  {
    label: "Notepad",
    art: (
      <>
        <path d="M9 2l11 1 3 17-6 3-16-2z" fill="#dbe7ec" />
        <path d="M9 2l9 1-2 17-14-1z" fill="#4f93a8" />
        <path d="M9 2l9 1-1 9L5 11z" fill="#a6cdd6" />
        <path d="M18 3l3 17-5 1z" fill="#eef3f5" />
      </>
    ),
  },
  {
    label: "Edge",
    art: (
      <>
        <circle cx="12" cy="12" r="11.500" fill="#1878c9" />
        <path d="M1 10C3-3 23-2 23.500 10c0 5-5 6-8 5 2-3 0-7-4-7-5 0-8 0-10.500 2z" fill="#45c96b" />
        <path d="M1 10C3 1 13-2 19 3c-8 0-14 2-18 7z" fill="#35b6d8" />
        <path d="M12 8c4 0 5.500 4 3.500 7 3 2 6 1 7.500-1-1 3-4 6-7 6-5 0-8-6-4-12z" fill="#101011" />
        <path d="M10 9c-5 5-2 13 5 14-8 1-14-5-13-11 1-3 5-4 8-3z" fill="#1660b0" />
      </>
    ),
  },
  {
    label: "File Explorer",
    art: (
      <>
        <path d="M2 3h8l2 2h10v16H2z" fill="#e8a92e" />
        <path d="M2 7h20v14H2z" fill="#fbd567" />
        <path d="M5 22v-8h14v8h-4v-4H9v4z" fill="#4f97cd" />
      </>
    ),
  },
  {
    label: "Mail",
    art: (
      <>
        <path d="M0 10L12 1l12 9v13H0z" fill="#1a5ca8" />
        <path d="M2 9h20v3l-10 6-10-6z" fill="#f4f7fa" />
        <path d="M0 10l12 7.500L24 10v13H0z" fill="#2c9be8" />
        <path d="M0 23l12-6 12 6z" fill="#45b4f4" />
      </>
    ),
  },
  { label: "Chrome", art: chrome },
  {
    label: "Chrome profile",
    running: true,
    art: (
      <>
        <g transform="translate(-1 0)">{chrome}</g>
        <circle cx="17" cy="17" r="7" fill="#eef0f3" />
        <path d="M12.500 22c1-3 8-3 9 0-2 2.500-7 2.500-9 0z" fill="#fff" />
        <ellipse cx="17" cy="15.500" rx="2.700" ry="3.800" fill="#9a7058" />
        <path d="M14 15c-1-6 7-6 6 0-1-2-5-2-6 0z" fill="#1b1b1d" />
      </>
    ),
  },
  {
    label: "Photos",
    running: true,
    art: (
      <>
        <path d="M1 1h22v22H1z" fill="#1d6fc4" />
        <path d="M1 18l8-9 8 8v6H1z" fill="#12315e" />
        <path d="M10 23l7-8 6 6v2z" fill="#2e8fe0" />
        <circle cx="17" cy="7" r="2" fill="#e8f2fb" />
      </>
    ),
  },
  {
    label: "SolidWorks",
    running: true,
    focus: true,
    art: (
      <>
        <path d="M1 5l8-4 14 2-5 4z" fill="#f0665c" />
        <path d="M1 5l12 3v15L2 19z" fill="#d01f1c" />
        <path d="M13 8l10-5-1 15-9 5z" fill="#a01210" />
        <text x="3" y="18" fontSize="12" fontWeight="700" fill="#fff">S</text>
        <text x="12" y="17" fontSize="10" fontWeight="700" fill="#fff">W</text>
      </>
    ),
  },
];

const quickTools = [["page", "New"], ["open", "Open"], ["save", "Save"], ["print", "Print"], ["undo", "Undo"]];

const viewTools = [
  ["zoomFit", "Zoom to Fit"],
  ["zoomArea", "Zoom to Area"],
  ["prevView", "Previous View"],
  ["section", "Section View"],
  ["orientation", "View Orientation", true],
  ["display", "Display Style", true],
  ["glasses", "Hide/Show Items", true],
  ["sphere", "Edit Appearance"],
  ["scene", "Apply Scene", true],
  ["viewSettings", "View Settings", true],
];

const commandTabs = [["Features", 64], ["Sketch", 57], ["Surfaces", 60], ["Evaluate", 60], ["DimXpert", 66], ["Office Products", 96]];

const App = () => (
  <Window>
    <GlobalStyle />
    <TitleBar>
      <Brand>
        <svg width="120" height="24" viewBox="0 0 120 24" role="img" aria-label="SolidWorks">
          <g fill="none" stroke="#f3f4f5" strokeWidth="1.600" strokeLinejoin="round">
            <path d="M3 4l7-1-4 4c3 0 2 5-3 7M1 20l4-9c7 0 6 8-4 9M20 8l-5 1c-3 1 3 4 2 7-1 2-4 3-7 3" />
          </g>
          <text x="26" y="19" fontFamily="Open Sans, sans-serif" fontStyle="italic" fontSize="14" fill="#f3f4f5">
            <tspan fontWeight="700">SOLID</tspan>WORKS
          </text>
        </svg>
      </Brand>
      <Grip aria-label="Show menu" />
      <QuickBar>
        {quickTools.map(([icon, label]) => (
          <ToolButton key={icon} aria-label={label}>
            <Icon name={icon} />
            <Caret />
          </ToolButton>
        ))}
        <SelectButton aria-label="Select">
          <span>
            <Icon name="cursor" />
          </span>
          <Caret />
        </SelectButton>
        <ToolButton aria-label="Rebuild">
          <Icon name="traffic" />
        </ToolButton>
        <ToolButton aria-label="File Properties">
          <Icon name="properties" />
        </ToolButton>
        <ToolButton aria-label="Options">
          <Icon name="options" />
          <Caret />
        </ToolButton>
      </QuickBar>
      <DocTitle>Part1 *</DocTitle>
      <Search>
        <Icon name="folder" />
        <input type="text" placeholder="Search files and models" aria-label="Search files and models" />
        <Icon name="lens" />
        <Caret />
      </Search>
      <WindowButtons>
        <ToolButton aria-label="Help">
          <Icon name="help" />
          <Caret />
        </ToolButton>
        <ToolButton aria-label="Minimize">
          <Icon name="minimize" />
        </ToolButton>
        <ToolButton aria-label="Restore">
          <Icon name="restore" />
        </ToolButton>
        <ToolButton aria-label="Close">
          <Icon name="close" />
        </ToolButton>
      </WindowButtons>
    </TitleBar>

    <Ribbon>
      <Big icon="extrude" lines={["Extruded", "Boss/Base"]} w={60} />
      <Big icon="revolve" lines={["Revolved", "Boss/Base"]} w={62} />
      <List w={130} items={[["sweep", "Swept Boss/Base"], ["loft", "Lofted Boss/Base"], ["boundary", "Boundary Boss/Base"]]} />
      <Separator />
      <Big icon="cutExtrude" lines={["Extruded", "Cut"]} w={50} />
      <Big icon="hole" lines={["Hole", "Wizard"]} w={52} />
      <Big icon="cutRevolve" lines={["Revolved", "Cut"]} w={55} />
      <List w={98} items={[["cutSweep", "Swept Cut"], ["cutLoft", "Lofted Cut"], ["cutBoundary", "Boundary Cut"]]} />
      <Separator />
      <Big icon="fillet" lines={["Fillet"]} w={30} drop />
      <Big icon="pattern" lines={["Linear", "Pattern"]} w={51} drop />
      <List w={61} items={[["rib", "Rib"], ["draft", "Draft"], ["shell", "Shell"]]} />
      <List w={72} items={[["wrap", "Wrap"], ["intersect", "Intersect"], ["mirror", "Mirror"]]} />
      <Separator />
      <Big icon="geometry" lines={["Reference", "Geometry"]} w={56} drop />
      <Big icon="curves" lines={["Curves"]} w={45} drop />
      <Separator $tight />
      <Big icon="instant" lines={["Instant3D"]} w={60} active />
      <Big icon="orientation" lines={["View", "Orientation"]} w={76} drop />
      <Big icon="normal" lines={["Normal", "To"]} w={44} />
      <Big icon="isometric" lines={["Isometric"]} w={56} active />
    </Ribbon>

    <TabRow>
      <CommandTabs>
        {commandTabs.map(([label, w], i) => (
          <CommandTab key={label} $w={w} $active={i === 0}>
            {label}
          </CommandTab>
        ))}
      </CommandTabs>
      <ViewTools>
        {viewTools.map(([icon, label, drop]) => (
          <ToolButton key={icon} aria-label={label}>
            <Icon name={icon} />
            {drop && <Caret />}
          </ToolButton>
        ))}
      </ViewTools>
      <DocButtons>
        {["paneLeft", "paneRight", "minimize", "restore", "close"].map((name) => (
          <ToolButton key={name} aria-label={name}>
            <Icon name={name} />
          </ToolButton>
        ))}
      </DocButtons>
    </TabRow>

    <Body>
      <Sidebar>
        <PanelTabs>
          {["part", "properties", "config", "target", "appearance"].map((name, i) => (
            <PanelTab key={name} $active={i === 0} aria-label={name}>
              <Icon name={name} />
            </PanelTab>
          ))}
          <More aria-label="More tabs">»</More>
        </PanelTabs>
        <Filter>
          <Icon name="filter" size={12} />
          <input type="text" aria-label="Filter tree" />
        </Filter>
        <TreeArea>
          <Tree>
            {treeItems.map((item) => (
              <TreeItem key={item.label} {...item} />
            ))}
          </Tree>
          <ScrollColumn>
            <ScrollArrow aria-label="Scroll up">
              <Chevron d="M1 6.500l3.500-4L8 6.500" />
            </ScrollArrow>
            <ScrollThumb />
            <Spacer />
            <ScrollArrow aria-label="Scroll down">
              <Chevron d="M1 2.500l3.500 4 3.500-4" />
            </ScrollArrow>
          </ScrollColumn>
        </TreeArea>
        <ScrollRow>
          <ScrollArrow aria-label="Scroll left">
            <Chevron d="M6.500 1l-4 3.500 4 3.500" />
          </ScrollArrow>
          <span />
          <ScrollArrow aria-label="Scroll right">
            <Chevron d="M2.500 1l4 3.500-4 3.500" />
          </ScrollArrow>
        </ScrollRow>
      </Sidebar>
      <Viewport>
        <Collapse aria-label="Collapse panel">
          <i />
          <i />
          <i />
        </Collapse>
        <Fitting />
        <Orientation>
          <Triad />
          <div>*Isometric</div>
        </Orientation>
        <TaskPane>
          {["task", "home", "library", "folder", "palette", "sphere", "properties"].map((name) => (
            <TaskButton key={name} $active={name === "sphere"} aria-label={name}>
              <Icon name={name} />
            </TaskButton>
          ))}
        </TaskPane>
      </Viewport>
    </Body>

    <SheetTabs>
      {["M8 2L4 5l4 3zM3 2v6", "M7 2L3 5l4 3z", "M3 2l4 3-4 3z", "M2 2l4 3-4 3zM8 2v6"].map((d) => (
        <StepButton key={d} aria-label="Step">
          <svg width="10" height="10" viewBox="0 0 10 10">
            <path d={d} fill="#8b8c93" stroke="#8b8c93" />
          </svg>
        </StepButton>
      ))}
      <SheetTab $w={57} $active>
        Model
      </SheetTab>
      <SheetTab $w={105}>Motion Study 1</SheetTab>
    </SheetTabs>
    <StatusBar>
      <span>SolidWorks Premium 2014 x64 Edition</span>
      <Spacer />
      <span>Editing Part</span>
      <Spacer $w={53} />
      <span>MMGS</span>
      <Spacer $w={19} />
      <svg width="7" height="4" viewBox="0 0 7 4">
        <path d="M1 3.500h5L3.500 0z" fill="#33353b" />
      </svg>
      <Spacer $w={16} />
      <HelpBadge>?</HelpBadge>
      <Spacer $w={51} />
      <Icon name="tag" />
    </StatusBar>

    <Taskbar>
      <TaskbarButton $w={48} aria-label="Start">
        <Glyph>
          <path d="M4 6l7-1v6.500H4zM12 5l8-1v7.500h-8zM4 12.500h7V19l-7-1zM12 12.500h8V20l-8-1z" fill="#fff" />
        </Glyph>
      </TaskbarButton>
      <TaskbarButton $w={48} aria-label="Search">
        <Glyph>
          <circle cx="14" cy="9" r="5" stroke="#fff" strokeWidth="1.500" />
          <path d="M10.500 12.500L4 20" stroke="#fff" strokeWidth="1.500" />
        </Glyph>
      </TaskbarButton>
      <TaskbarButton $w={48} aria-label="Cortana">
        <Glyph>
          <circle cx="12" cy="12" r="7" stroke="#fff" strokeWidth="2" />
        </Glyph>
      </TaskbarButton>
      <TaskbarButton $w={50} aria-label="Task View">
        <Glyph>
          <path d="M4 4v3h10V4M4 20v-3h10v3M4 9.500h10v5H4zM18 4v4M18 12v8" stroke="#fff" strokeWidth="1.300" />
          <path d="M17 9h2v2h-2z" fill="#fff" />
        </Glyph>
      </TaskbarButton>
      {apps.map((app) => (
        <TaskbarButton key={app.label} $w={49} $running={app.running} $focus={app.focus} aria-label={app.label}>
          <Glyph>{app.art}</Glyph>
        </TaskbarButton>
      ))}
      <LanguageBar>
        <button aria-label="Input tool">
          <Glyph size={18}>
            <path d="M4 8c4-3 7 0 3 4 6-1 5 7-2 6M12 13c4-4 6 2 3 5M20 5v15" stroke="#8a5f1c" strokeWidth="2" />
          </Glyph>
        </button>
        <button>English</button>
        <button aria-label="Keyboard">
          <Glyph size={18}><path d="M2 16l4-5h12l4 5z" fill="#55575c" /></Glyph>
        </button>
        <button aria-label="Character map">
          <Glyph size={18}><path d="M6 3h3l2 5h3l2-5h3l-3 9v9H8v-9z" fill="#4c4f58" /></Glyph>
        </button>
        <button aria-label="Settings">
          <Glyph size={18}>
            <circle cx="12" cy="12" r="6" stroke="#3c4658" strokeWidth="4" />
            <circle cx="12" cy="12" r="9" stroke="#3c4658" strokeWidth="3" strokeDasharray="3 4" />
          </Glyph>
        </button>
        <button aria-label="Web">
          <Glyph size={18}>
            <path d="M6 13h13c0-9-13-9-13 0 0 7 9 8 12 3" stroke="#23607c" strokeWidth="3" />
            <path d="M3 21C0 14 14 2 22 4" stroke="#7a6626" strokeWidth="2" />
          </Glyph>
        </button>
        <button aria-label="Help">
          <Glyph size={18}>
            <circle cx="12" cy="12" r="9" fill="#182a58" stroke="#33477c" strokeWidth="2" />
            <path d="M9 9c0-4 6-4 6 0 0 2-3 2-3 5M12 16v2" stroke="#5872ac" strokeWidth="2" />
          </Glyph>
        </button>
        <button aria-label="Close bar">
          <Glyph size={18}>
            <circle cx="12" cy="12" r="8" stroke="#77797f" strokeWidth="2" />
            <path d="M12 7v10" stroke="#77797f" strokeWidth="2" />
          </Glyph>
        </button>
      </LanguageBar>
      <Tray>
        <button aria-label="Hidden icons">
          <Glyph size={18}><path d="M5 15l7-7 7 7" stroke="#fff" strokeWidth="2" /></Glyph>
        </button>
        <button aria-label="Network">
          <Glyph size={18}>
            <path d="M5 21C5 12 12 5 21 5M10 21c0-6 5-11 11-11M14 21c0-4 3-7 7-7" stroke="#fff" strokeWidth="1.500" />
            <circle cx="19" cy="19" r="2" fill="#fff" />
          </Glyph>
        </button>
        <button aria-label="Battery">
          <Glyph size={18}>
            <path d="M6 9h14v9H6zM21 12v3M3 3v3M7 3v3M2 6h6v3H2zM5 9v8" stroke="#fff" strokeWidth="1.500" />
            <path d="M9 11h9v5H9z" fill="#fff" />
          </Glyph>
        </button>
        <button aria-label="Volume">
          <Glyph size={18}>
            <path d="M2 9h4l5-5v16l-5-5H2zM14 9q2 3 0 6M17 6q4 6 0 12M20 4q6 8 0 16" stroke="#fff" strokeWidth="1.500" />
          </Glyph>
        </button>
        <Clock>
          3:28 AM
          <br />
          30-Jun-22
        </Clock>
        <Spacer $w={4} />
        <button aria-label="Notifications">
          <Glyph size={20}><path d="M3 4h18v14h-5l-2 3-3-3H3z" stroke="#fff" strokeWidth="1.500" /></Glyph>
        </button>
      </Tray>
    </Taskbar>
  </Window>
);

export default App;
